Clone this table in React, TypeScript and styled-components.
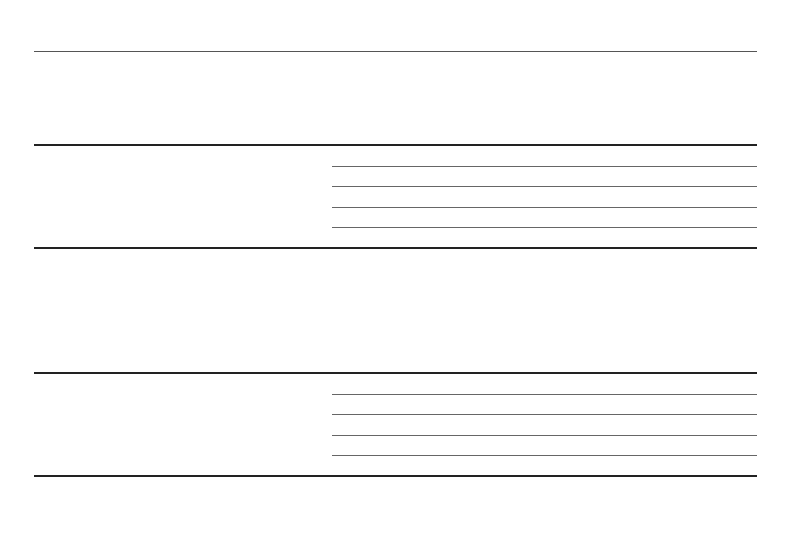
import React from "react";
import styled, { createGlobalStyle } from "styled-components";

const GlobalStyle = createGlobalStyle`
  html, body {
    margin: 0;
    padding: 0;
    background: #ffffff;
    font-family: "Liberation Sans", Arial, sans-serif;
  }
`;

const Page = styled.div`
  width: 723px;
  padding: 51px 0 0 34px;
`;

const HeaderRule = styled.div`
  height: 0;
  border-top: 1px solid #555555;
`;

const Section = styled.section<{ $gap: number }>`
  margin-top: ${(p) => p.$gap}px;
  border-top: 2px solid #222222;
  border-bottom: 2px solid #222222;
  display: grid;
  grid-template-columns: 298px 1fr;
`;

const LeftCell = styled.div``;

const RowList = styled.div`
  display: flex;
  flex-direction: column;
  padding-bottom: 19px;
`;

const Row = styled.div`
  height: 19.5px;
  border-bottom: 1px solid #666666;
`;

const SpecBlock: React.FC<{ gap: number }> = ({ gap }) => (
  <Section $gap={gap}>
    <LeftCell />
    <RowList>
      {[0, 1, 2, 3].map((i) => (
        <Row key={i} />
      ))}
    </RowList>
  </Section>
);

export default function App() {
  return (
    <>
      <GlobalStyle />
      <Page>
        <HeaderRule />
        <SpecBlock gap={92} />
        <SpecBlock gap={123} />
      </Page>
    </>
  );
}
